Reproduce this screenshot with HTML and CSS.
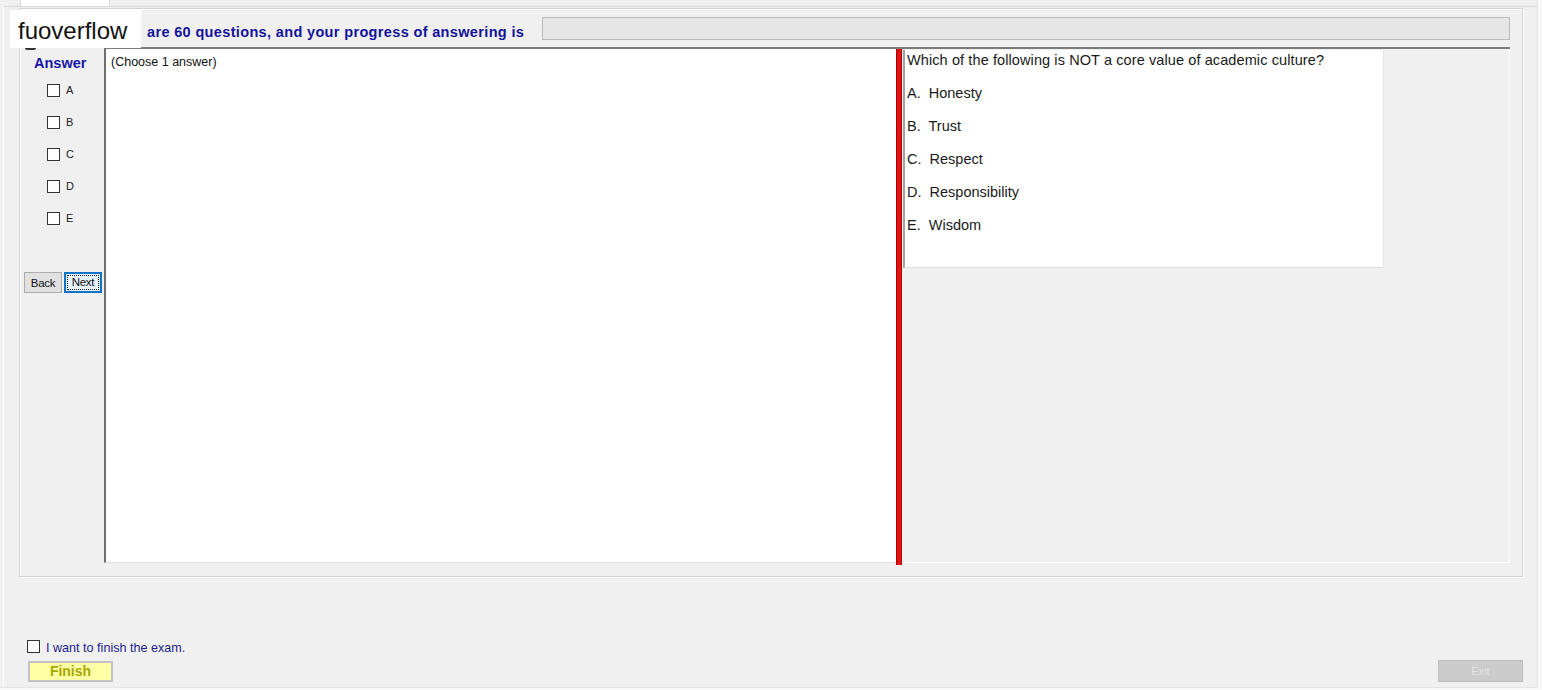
FILE: index.html
```html
<!DOCTYPE html>
<html>
<head>
<meta charset="utf-8">
<title>Exam</title>
<link rel="stylesheet" href="styles.css">
</head>
<body>
<div class="window">
  <div class="tabs"><div class="tab"></div></div>
  <div class="tabpage">
    <div class="group">
      <div class="header">
        <div class="title">are 60 questions, and your progress of answering is</div>
        <div class="progress"></div>
      </div>
      <div class="body">
        <div class="answers">
          <div class="answer-title">Answer</div>
          <div class="opts">
            <label class="opt"><span class="box"></span><span class="letter">A</span></label>
            <label class="opt"><span class="box"></span><span class="letter">B</span></label>
            <label class="opt"><span class="box"></span><span class="letter">C</span></label>
            <label class="opt"><span class="box"></span><span class="letter">D</span></label>
            <label class="opt"><span class="box"></span><span class="letter">E</span></label>
          </div>
          <div class="navs">
            <button class="btn back">Back</button>
            <button class="btn next"><span class="focus">Next</span></button>
          </div>
        </div>
        <div class="split">
          <div class="pane-left">(Choose 1 answer)</div>
          <div class="splitter"></div>
          <div class="pane-right">
            <div class="question">
              <div class="q">Which of the following is NOT a core value of academic culture?</div>
              <div class="a">A.&nbsp; Honesty</div>
              <div class="a">B.&nbsp; Trust</div>
              <div class="a">C.&nbsp; Respect</div>
              <div class="a">D.&nbsp; Responsibility</div>
              <div class="a">E.&nbsp; Wisdom</div>
            </div>
          </div>
        </div>
      </div>
    </div>
    <div class="footer">
      <label class="finish-check"><span class="box"></span><span class="finish-text">I want to finish the exam.</span></label>
      <div class="footer-row">
        <button class="finish">Finish</button>
        <button class="exit" disabled>Exit</button>
      </div>
    </div>
  </div>
  <div class="watermark">fuoverflow</div>
  <div class="peek"></div>
</div>
</body>
</html>
```
FILE: styles.css
```css
* { box-sizing: border-box; }
html, body { margin: 0; padding: 0; }
body {
  background: #f9f9f9;
  font-family: "Liberation Sans", Arial, sans-serif;
  width: 1542px;
  height: 690px;
  overflow: hidden;
}
.window {
  position: relative;
  width: 1538px;
  height: 688px;
  background: #f0f0f0;
  border-right: 1px solid #e4e4e4;
  border-bottom: 1px solid #e4e4e4;
  display: flex;
  flex-direction: column;
}
.tabs {
  height: 6px;
  padding-left: 20px;
  display: flex;
}
.tab {
  width: 90px;
  height: 6px;
  background: #fff;
  border-left: 1px solid #dadada;
  border-right: 1px solid #dadada;
}
.tabpage {
  flex: 1;
  margin-left: 3px;
  border-top: 1px solid #dadada;
  border-left: 1px solid #fdfdfd;
  padding: 1px 14px 0 15px;
  display: flex;
  flex-direction: column;
}
.group {
  height: 569px;
  border: 1px solid #d4d4d4;
  box-shadow: inset 1px 1px 0 #fff, 1px 1px 0 #fff;
  padding: 8px 12px 0 4px;
  display: flex;
  flex-direction: column;
}
.header {
  height: 23px;
  display: flex;
  align-items: flex-start;
}
.title {
  margin-left: 123px;
  padding-top: 7px;
  font-weight: bold;
  font-size: 14.5px;
  letter-spacing: 0.35px;
  line-height: 17px;
  color: #13139b;
  white-space: nowrap;
}
.progress {
  margin-left: auto;
  width: 968px;
  height: 23px;
  background: #e6e6e6;
  border: 1px solid #bcbcbc;
}
.body {
  margin-top: 7px;
  height: 517px;
  display: flex;
}
.answers {
  width: 80px;
  display: flex;
  flex-direction: column;
}
.answer-title {
  padding: 8px 0 0 10px;
  font-weight: bold;
  font-size: 14.5px;
  line-height: 16px;
  color: #1616a8;
}
.opts {
  margin-top: 13px;
  padding-left: 23px;
  display: flex;
  flex-direction: column;
}
.opt {
  height: 32px;
  display: flex;
  align-items: flex-start;
  font-size: 11px;
  color: #222;
}
.box {
  display: inline-block;
  width: 13px;
  height: 13px;
  background: #fff;
  border: 1px solid #333;
  flex: none;
}
.letter {
  margin-left: 6px;
  line-height: 12px;
}
.navs {
  margin-top: 28px;
  display: flex;
  gap: 2px;
}
.btn {
  height: 21px;
  padding: 0;
  font-family: "Liberation Sans", Arial, sans-serif;
  font-size: 11.5px;
  color: #111;
  letter-spacing: -0.3px;
}
.back {
  width: 38px;
  background: #e1e1e1;
  border: 1px solid #adadad;
}
.next {
  width: 38px;
  background: #e5f1fb;
  border: 2px solid #0f74c9;
  display: flex;
  align-items: stretch;
  justify-content: stretch;
  padding: 1px;
}
.focus {
  flex: 1;
  border: 1px dotted #222;
  line-height: 13px;
}
.split {
  flex: 1;
  display: flex;
  border-top: 2px solid #7c7c7c;
}
.pane-left {
  width: 792px;
  height: 514px;
  background: #fff;
  border-left: 2px solid #6e6e6e;
  border-bottom: 1px solid #e3e3e3;
  padding: 6px 0 0 5px;
  font-size: 12.5px;
  line-height: 14px;
  color: #111;
}
.splitter {
  width: 6px;
  height: 516px;
  background: #e01414;
  border-left: 1px solid #a00;
  border-right: 1px solid #b00;
}
.pane-right {
  flex: 1;
  height: 514px;
  border-right: 1px solid #fff;
  border-bottom: 1px solid #fff;
  padding: 1px 0 0 1px;
}
.question {
  width: 481px;
  height: 218px;
  background: #fff;
  border-left: 2px solid #a3a3a3;
  border-bottom: 1px solid #dedede;
  border-right: 1px solid #e6e6e6;
  padding: 2px 0 0 2px;
  font-size: 14.5px;
  line-height: 17px;
  color: #1a1a1a;
}
.q { letter-spacing: 0.1px; }
.a { margin-top: 16px; }
.footer {
  flex: 1;
  display: flex;
  flex-direction: column;
  padding: 63px 0 0 8px;
}
.finish-check {
  display: flex;
  align-items: flex-start;
  height: 20px;
}
.finish-text {
  margin-left: 6px;
  font-size: 12.6px;
  line-height: 16px;
  color: #1b1b8f;
}
.footer-row {
  display: flex;
  align-items: flex-end;
  padding-left: 1px;
}
.finish {
  width: 85px;
  height: 21px;
  background: #ffffa6;
  border: 2px solid #c2c2c2;
  font-family: "Liberation Sans", Arial, sans-serif;
  font-weight: bold;
  font-size: 14px;
  color: #a6a600;
  padding: 0;
  line-height: 15px;
}
.exit {
  margin-left: auto;
  width: 85px;
  height: 22px;
  background: #cccccc;
  border: 1px solid #bdbdbd;
  font-family: "Liberation Sans", Arial, sans-serif;
  font-size: 11px;
  color: #e2e2e2;
  padding: 0;
}
.watermark {
  position: absolute;
  left: 10px;
  top: 10px;
  width: 131px;
  height: 38px;
  background: #fff;
  padding: 7px 0 0 8px;
  font-size: 24px;
  line-height: 28px;
  color: #111;
}
.peek {
  position: absolute;
  left: 25px;
  top: 48px;
  width: 11px;
  height: 2px;
  background: #333;
  border-radius: 0 0 5px 5px;
}
```
